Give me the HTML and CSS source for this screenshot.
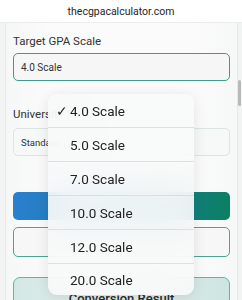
FILE: index.html
```html
<!DOCTYPE html>
<html>
<head>
<meta charset="utf-8">
<link rel="stylesheet" href="styles.css">
</head>
<body>
<div class="urlbar">thecgpacalculator.com</div>
<div class="page">
  <div class="card">
    <div class="label first">Target GPA Scale</div>
    <div class="select active">4.0 Scale</div>
    <div class="label second">University Scale</div>
    <div class="select plain">Standard</div>
    <div class="btn primary"></div>
    <div class="btn outline"></div>
    <div class="result">Conversion Result</div>
  </div>
</div>
<div class="scrollbar"></div>
<div class="menu">
  <div class="item"><span class="check">✓</span>4.0 Scale</div>
  <div class="item">5.0 Scale</div>
  <div class="item">7.0 Scale</div>
  <div class="item">10.0 Scale</div>
  <div class="item">12.0 Scale</div>
  <div class="item">20.0 Scale</div>
</div>
</body>
</html>
```
FILE: styles.css
```css
* { box-sizing: border-box; }
html, body { margin: 0; padding: 0; }
body {
  width: 242px;
  height: 300px;
  overflow: hidden;
  font-family: Roboto, "Liberation Sans", sans-serif;
  background: #f2f3f3;
  position: relative;
  color: #2b2b2b;
}
.urlbar {
  height: 23px;
  background: #fff;
  border-bottom: 1px solid #ececec;
  font-size: 10.5px;
  text-align: center;
  line-height: 24px;
  color: #1e1e1e;
}
.page {
  padding: 0 4px 0 5px;
  height: 277px;
  overflow: hidden;
}
.card {
  background: linear-gradient(90deg, #f6f7f7, #fbfbfb 20%, #fbfbfb 80%, #f6f7f7);
  border-left: 1px solid #e4e9e9;
  border-right: 1px solid #e4e9e9;
  min-height: 100%;
  padding: 10px 7px 0 7px;
  display: flex;
  flex-direction: column;
}
.card > * { flex-shrink: 0; }
.label {
  font-size: 11.5px;
  color: #333;
  line-height: 16px;
}
.select {
  height: 28px;
  border-radius: 5px;
  font-size: 10px;
  padding-left: 7px;
  display: flex;
  align-items: center;
  color: #333;
}
.active {
  margin-top: 4px;
  border: 1.5px solid #3e9c8c;
  background: #f6f6f6;
}
.second { margin-top: 25px; }
.plain {
  margin-top: 6px;
  border: 1px solid #dde4e4;
  background: #f7f8f8;
  font-size: 9.5px;
}
.btn {
  border-radius: 5px;
  font-size: 12px;
  display: flex;
  align-items: center;
  justify-content: center;
}
.primary {
  margin-top: 36px;
  height: 28px;
  background: linear-gradient(90deg, #2a7fcf, #1d7ea8 50%, #0b7f62);
  color: #fff;
}
.outline {
  margin-top: 7px;
  height: 30px;
  border: 1.5px solid #4ea394;
  background: #f7f7f7;
}
.result {
  margin-top: 20px;
  height: 40px;
  border: 1.5px solid #68b2a5;
  border-radius: 7px;
  background: linear-gradient(90deg, #d3e8e4, #e3f0ee 50%, #cde5e1);
  font-size: 13px;
  font-weight: 500;
  text-align: center;
  padding-top: 13px;
  line-height: 16px;
  color: #2b2b2b;
}
.scrollbar {
  position: absolute;
  left: 238px;
  top: 80px;
  width: 2.5px;
  height: 26px;
  border-radius: 2px;
  background: #b9b9b9;
}
.menu {
  position: absolute;
  left: 48px;
  top: 94px;
  width: 146px;
  border-radius: 9px;
  background: rgba(248, 250, 250, 0.9);
  backdrop-filter: blur(18px);
  box-shadow: 0 2px 14px rgba(0, 0, 0, 0.10);
  overflow: hidden;
  display: flex;
  flex-direction: column;
}
.item {
  height: 34px;
  font-size: 13.5px;
  color: #222;
  padding-left: 22px;
  display: flex;
  align-items: center;
  border-top: 1px solid rgba(200, 220, 218, 0.7);
  position: relative;
}
.item:first-child { border-top: none; height: 33px; }
.item:last-child { height: 32px; }
.check {
  position: absolute;
  left: 8px;
  font-size: 14px;
}
```
